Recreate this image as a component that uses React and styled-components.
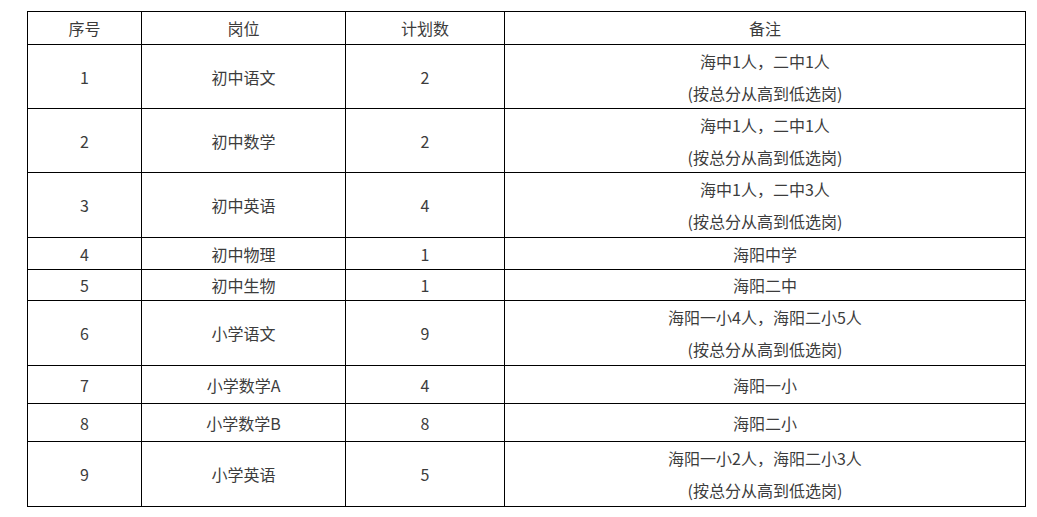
import React from "react";
import styled, { createGlobalStyle } from "styled-components";

const GlobalStyle = createGlobalStyle`
  html, body {
    margin: 0;
    padding: 0;
    background: #ffffff;
  }
  body {
    font-family: "Noto Sans CJK SC", "Noto Sans", sans-serif;
  }
`;

const Page = styled.div`
  padding: 11px 0 0 27px;
`;

const Table = styled.table`
  border-collapse: collapse;
  table-layout: fixed;
  width: 999px;
  color: #3c3c3c;
  font-size: 16px;
  line-height: 32px;
`;

const Col = styled.col`
  width: ${(p) => p.$w}px;
`;

const HeadCell = styled.th`
  border: 1px solid #000;
  font-weight: normal;
  text-align: center;
  vertical-align: middle;
  padding: 0;
`;

const Cell = styled.td`
  border: 1px solid #000;
  text-align: center;
  vertical-align: middle;
  padding: 0;
`;

const Inner = styled.div`
  height: ${(p) => p.$h - 1}px;
  display: flex;
  flex-direction: column;
  justify-content: center;
  align-items: center;
  overflow: visible;
`;

const Line = styled.div`
  line-height: 32px;
  flex: none;
  white-space: nowrap;
`;

const rows = [
  { n: "1", post: "初中语文", count: "2", note: ["海中1人，二中1人", "(按总分从高到低选岗)"], h: 64 },
  { n: "2", post: "初中数学", count: "2", note: ["海中1人，二中1人", "(按总分从高到低选岗)"], h: 64 },
  { n: "3", post: "初中英语", count: "4", note: ["海中1人，二中3人", "(按总分从高到低选岗)"], h: 65 },
  { n: "4", post: "初中物理", count: "1", note: ["海阳中学"], h: 32 },
  { n: "5", post: "初中生物", count: "1", note: ["海阳二中"], h: 31 },
  { n: "6", post: "小学语文", count: "9", note: ["海阳一小4人，海阳二小5人", "(按总分从高到低选岗)"], h: 65 },
  { n: "7", post: "小学数学A", count: "4", note: ["海阳一小"], h: 38 },
  { n: "8", post: "小学数学B", count: "8", note: ["海阳二小"], h: 38 },
  { n: "9", post: "小学英语", count: "5", note: ["海阳一小2人，海阳二小3人", "(按总分从高到低选岗)"], h: 65 },
];

export default function App() {
  return (
    <>
      <GlobalStyle />
      <Page>
        <Table>
          <colgroup>
            <Col $w={114} />
            <Col $w={204} />
            <Col $w={159} />
            <Col $w={521} />
          </colgroup>
          <thead>
            <tr>
              <HeadCell><Inner $h={33}><Line>序号</Line></Inner></HeadCell>
              <HeadCell><Inner $h={33}><Line>岗位</Line></Inner></HeadCell>
              <HeadCell><Inner $h={33}><Line>计划数</Line></Inner></HeadCell>
              <HeadCell><Inner $h={33}><Line>备注</Line></Inner></HeadCell>
            </tr>
          </thead>
          <tbody>
            {rows.map((r) => (
              <tr key={r.n}>
                <Cell><Inner $h={r.h}><Line>{r.n}</Line></Inner></Cell>
                <Cell><Inner $h={r.h}><Line>{r.post}</Line></Inner></Cell>
                <Cell><Inner $h={r.h}><Line>{r.count}</Line></Inner></Cell>
                <Cell>
                  <Inner $h={r.h}>
                    {r.note.map((t) => (
                      <Line key={t}>{t}</Line>
                    ))}
                  </Inner>
                </Cell>
              </tr>
            ))}
          </tbody>
        </Table>
      </Page>
    </>
  );
}
